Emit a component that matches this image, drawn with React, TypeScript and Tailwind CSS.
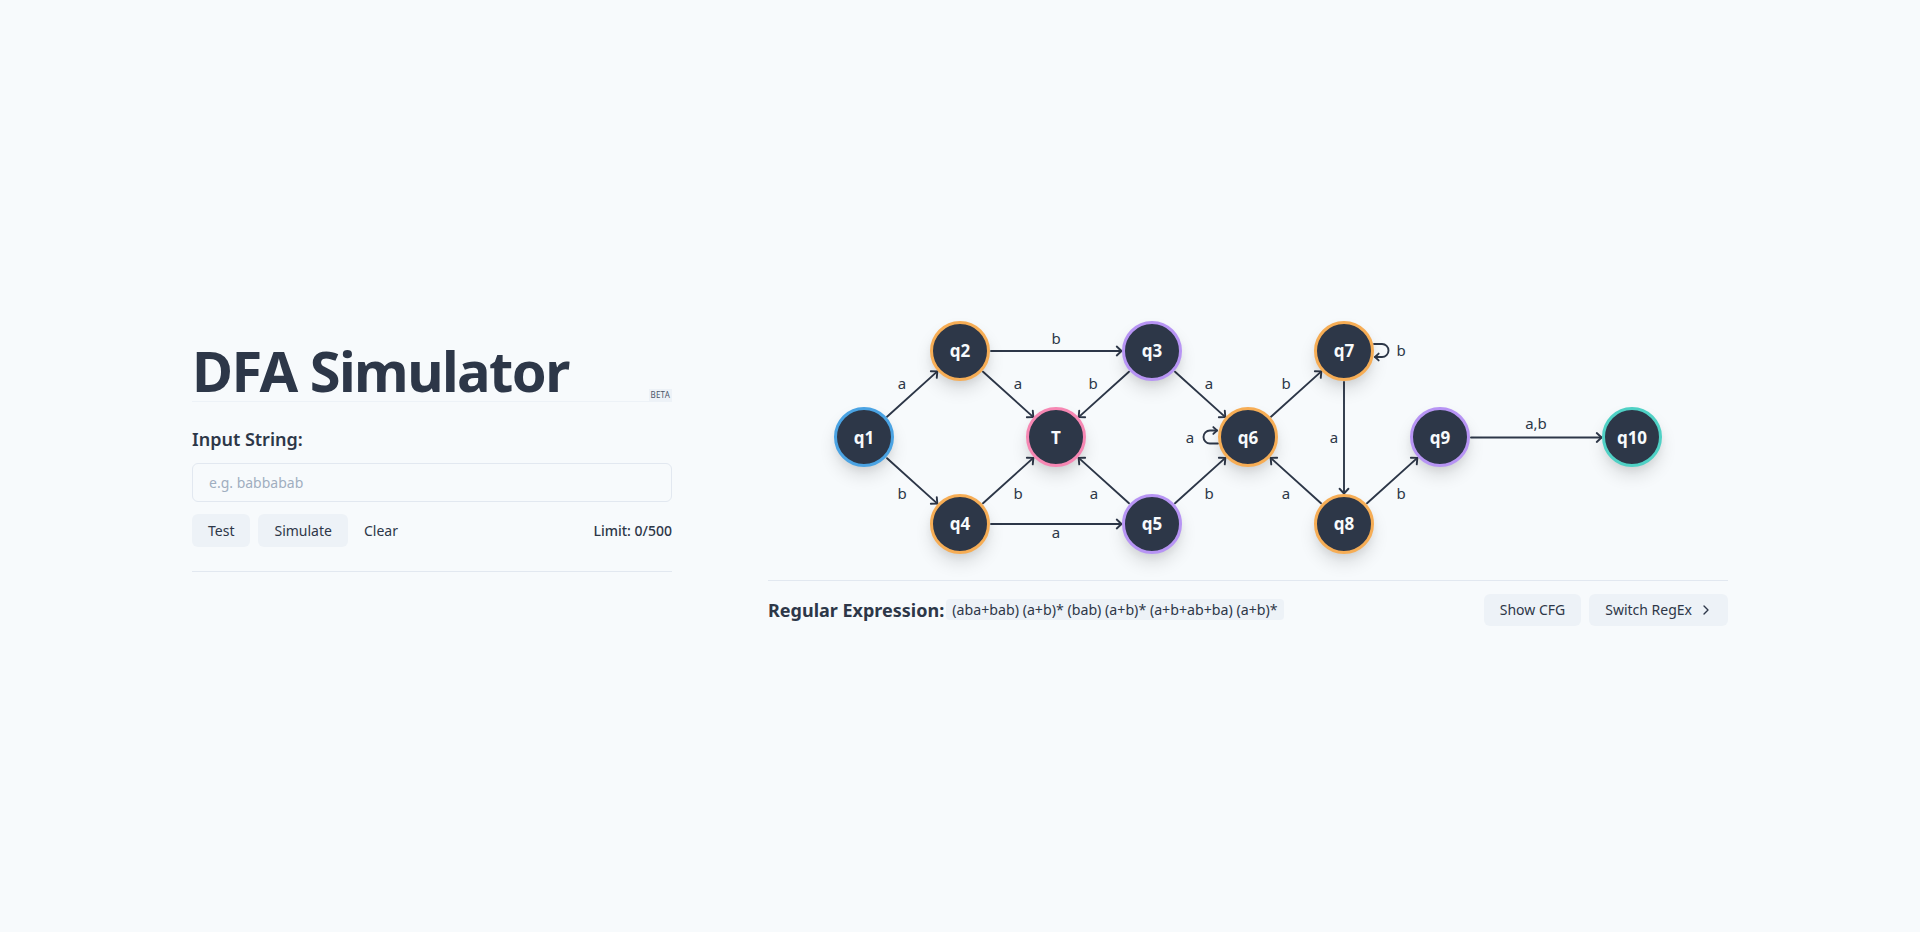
import React from "react";

type N = { x: number; y: number; c: string };
const OX = 768;
const OY = 306;
const R1 = 44, R2 = 130.5, R3 = 217;
const nodes: Record<string, N> = {
  q1: { x: 864, y: OY + R2, c: "#4aa3e3" },
  q2: { x: 960, y: OY + R1, c: "#f6ad55" },
  q3: { x: 1152, y: OY + R1, c: "#b794f4" },
  T: { x: 1056, y: OY + R2, c: "#f687b3" },
  q4: { x: 960, y: OY + R3, c: "#f6ad55" },
  q5: { x: 1152, y: OY + R3, c: "#b794f4" },
  q6: { x: 1248, y: OY + R2, c: "#f6ad55" },
  q7: { x: 1344, y: OY + R1, c: "#f6ad55" },
  q8: { x: 1344, y: OY + R3, c: "#f6ad55" },
  q9: { x: 1440, y: OY + R2, c: "#b794f4" },
  q10: { x: 1632, y: OY + R2, c: "#4fd1c5" },
};

const edges: [string, string][] = [
  ["q1", "q2"], ["q1", "q4"], ["q2", "q3"], ["q2", "T"], ["q3", "T"], ["q3", "q6"],
  ["q4", "T"], ["q4", "q5"], ["q5", "T"], ["q5", "q6"], ["q6", "q7"], ["q7", "q8"],
  ["q8", "q6"], ["q8", "q9"], ["q9", "q10"],
];

const labels: [string, number, number][] = [
  ["a", 902, 388], ["b", 902, 498], ["b", 1056, 343], ["a", 1018, 388], ["b", 1093, 388],
  ["a", 1209, 388], ["b", 1018, 498], ["a", 1056, 537], ["a", 1094, 498], ["b", 1209, 498],
  ["a", 1190, 442], ["b", 1286, 388], ["b", 1401, 355], ["a", 1334, 442], ["a", 1286, 498],
  ["b", 1401, 498], ["a,b", 1536, 428],
];

function arrowHead(tx: number, ty: number, ang: number, L = 6.5) {
  const a1 = ang + Math.PI - 0.75;
  const a2 = ang + Math.PI + 0.75;
  return `M ${tx + L * Math.cos(a1)} ${ty + L * Math.sin(a1)} L ${tx} ${ty} L ${tx + L * Math.cos(a2)} ${ty + L * Math.sin(a2)}`;
}

function Graph() {
  const paths: string[] = [];
  edges.forEach(([a, b]) => {
    const A = nodes[a], B = nodes[b];
    const dx = B.x - A.x, dy = B.y - A.y;
    const len = Math.hypot(dx, dy);
    const ux = dx / len, uy = dy / len;
    const sx = A.x + ux * 31, sy = A.y + uy * 31;
    const tx = B.x - ux * 30.5, ty = B.y - uy * 30.5;
    paths.push(`M ${sx} ${sy} L ${tx} ${ty}`);
    paths.push(arrowHead(tx, ty, Math.atan2(uy, ux)));
  });
  const q6 = nodes.q6;
  const lx = q6.x - 30;
  paths.push(`M ${lx} ${q6.y + 6} L ${lx - 8} ${q6.y + 6} A 6.5 6.5 0 0 1 ${lx - 8} ${q6.y - 7} L ${lx - 1} ${q6.y - 7}`);
  paths.push(arrowHead(lx - 1, q6.y - 7, 0, 5));
  const q7 = nodes.q7;
  const rx = q7.x + 30;
  paths.push(`M ${rx} ${q7.y - 7} L ${rx + 8} ${q7.y - 7} A 6.5 6.5 0 0 1 ${rx + 8} ${q7.y + 6} L ${rx + 1} ${q7.y + 6}`);
  paths.push(arrowHead(rx + 1, q7.y + 6, Math.PI, 5));

  return (
    <div className="relative w-[960px] h-[274px] border-b border-[#e2e8f0]">
      <svg
        className="absolute inset-0"
        width={960}
        height={274}
        viewBox={`${OX} ${OY} 960 274`}
      >
        {paths.map((d, i) => (
          <path key={i} d={d} fill="none" stroke="#2d3748" strokeWidth={1.9} strokeLinecap="round" strokeLinejoin="round" />
        ))}
        {labels.map(([t, x, y], i) => (
          <text key={i} x={x} y={y} textAnchor="middle" fontSize={15} fill="#2d3748" fontFamily="'Noto Sans', sans-serif">
            {t}
          </text>
        ))}
      </svg>
      {Object.entries(nodes).map(([name, n]) => (
        <div
          key={name}
          className="absolute w-[60px] h-[60px] rounded-full border-[3px] bg-[#2d3748] flex items-center justify-center shadow-[0_10px_18px_-2px_rgba(0,0,0,0.14),0_4px_8px_-2px_rgba(0,0,0,0.07)]"
          style={{ left: n.x - OX - 30, top: n.y - OY - 30, borderColor: n.c }}
        >
          <span className="text-[17px] font-bold text-[#f7fafc] leading-none">{name}</span>
        </div>
      ))}
    </div>
  );
}

export default function App() {
  return (
    <div className="min-h-screen w-full bg-[#f7fafc] flex items-center justify-center text-[#2d3748] font-['Noto_Sans',sans-serif]">
      <div className="w-[1536px] flex items-center gap-24">
        <div className="w-[480px] flex flex-col">
          <div className="relative border-b border-[#edf2f7] pb-[3px]">
            <h1 className="text-[56px] font-bold leading-none tracking-[-0.028em]">DFA Simulator</h1>
            <span className="absolute right-0 bottom-0 bg-[#edf2f7] text-[8px] leading-[12px] px-[2px] tracking-wide text-[#4a5568]">BETA</span>
          </div>
          <label className="mt-[23px] text-lg leading-7 font-semibold">Input String:</label>
          <input
            className="mt-2.5 h-[39px] w-full rounded-md border border-[#e2e8f0] bg-transparent px-4 text-sm outline-none placeholder:text-[#a0aec0]"
            placeholder="e.g. babbabab"
          />
          <div className="mt-3 flex items-center border-b border-[#e2e8f0] pb-6">
            <div className="flex items-center gap-2">
              <button className="h-[33px] px-4 rounded-md bg-[#edf2f7] text-sm">Test</button>
              <button className="h-[33px] px-4 rounded-md bg-[#edf2f7] text-sm">Simulate</button>
              <button className="h-[33px] px-2 rounded-md text-sm">Clear</button>
            </div>
            <span className="ml-auto text-sm font-medium">Limit: 0/500</span>
          </div>
          <div className="h-[18px]" />
        </div>
        <div className="w-[960px] flex flex-col">
          <Graph />
          <div className="flex items-center justify-between pt-[13px]">
            <div className="flex items-center">
              <span className="text-lg font-bold">Regular Expression:</span>
              <span className="ml-0.5 bg-[#edf2f7] rounded px-1.5 text-[14.2px] leading-[21px]">(aba+bab) (a+b)* (bab) (a+b)* (a+b+ab+ba) (a+b)*</span>
            </div>
            <div className="flex items-center gap-2">
              <button className="h-8 px-4 rounded-md bg-[#edf2f7] text-sm">Show CFG</button>
              <button className="h-8 pl-4 pr-3.5 rounded-md bg-[#edf2f7] text-sm flex items-center gap-1.5">
                Switch RegEx
                <svg width="16" height="16" viewBox="0 0 24 24" fill="none" stroke="currentColor" strokeWidth="2" strokeLinecap="round" strokeLinejoin="round">
                  <path d="m9 18 6-6-6-6" />
                </svg>
              </button>
            </div>
          </div>
        </div>
      </div>
    </div>
  );
}
